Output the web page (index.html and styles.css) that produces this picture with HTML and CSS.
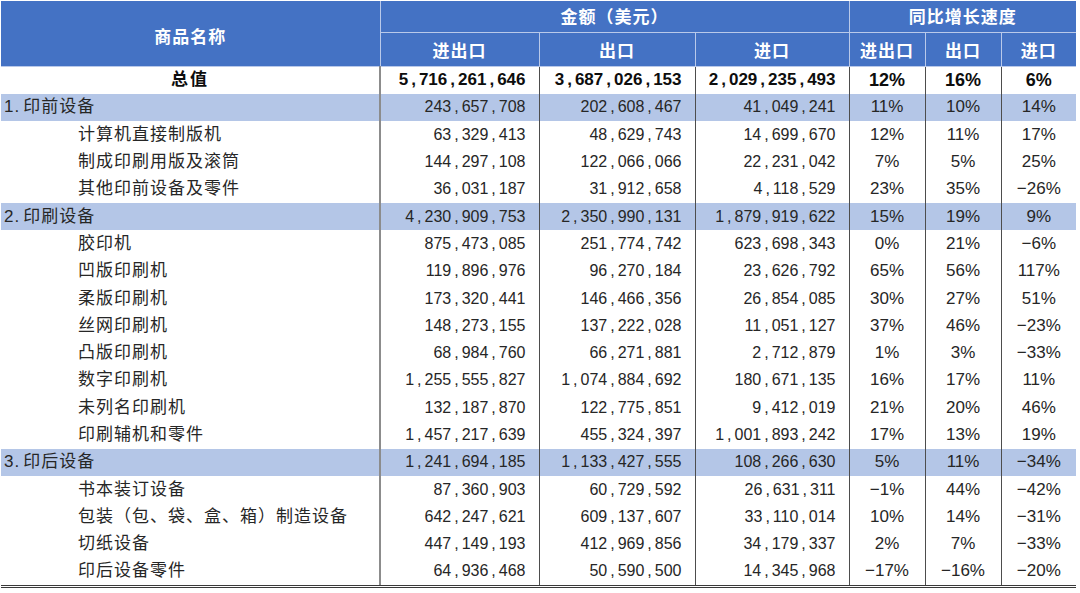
FILE: index.html
```html
<!DOCTYPE html>
<html lang="zh-CN">
<head>
<meta charset="utf-8">
<title>印刷设备进出口</title>
<link rel="stylesheet" href="styles.css">
</head>
<body>
<table class="trade">
  <colgroup>
    <col class="c-name"><col class="c-amt1"><col class="c-amt2"><col class="c-amt3"><col class="c-pct1"><col class="c-pct2"><col class="c-pct3">
  </colgroup>
  <thead>
    <tr class="h1">
      <th rowspan="2" class="h-name">商品名称</th>
      <th colspan="3">金额（美元）</th>
      <th colspan="3">同比增长速度</th>
    </tr>
    <tr class="h2">
      <th>进出口</th><th>出口</th><th>进口</th><th>进出口</th><th>出口</th><th>进口</th>
    </tr>
  </thead>
  <tbody>
    <tr class="total"><td class="name">总值</td><td class="n">5<i>,</i>716<i>,</i>261<i>,</i>646</td><td class="n">3<i>,</i>687<i>,</i>026<i>,</i>153</td><td class="n">2<i>,</i>029<i>,</i>235<i>,</i>493</td><td class="p">12%</td><td class="p">16%</td><td class="p">6%</td></tr>
    <tr class="band"><td class="name">1<i>.</i>印前设备</td><td class="n">243<i>,</i>657<i>,</i>708</td><td class="n">202<i>,</i>608<i>,</i>467</td><td class="n">41<i>,</i>049<i>,</i>241</td><td class="p">11%</td><td class="p">10%</td><td class="p">14%</td></tr>
    <tr><td class="name sub">计算机直接制版机</td><td class="n">63<i>,</i>329<i>,</i>413</td><td class="n">48<i>,</i>629<i>,</i>743</td><td class="n">14<i>,</i>699<i>,</i>670</td><td class="p">12%</td><td class="p">11%</td><td class="p">17%</td></tr>
    <tr><td class="name sub">制成印刷用版及滚筒</td><td class="n">144<i>,</i>297<i>,</i>108</td><td class="n">122<i>,</i>066<i>,</i>066</td><td class="n">22<i>,</i>231<i>,</i>042</td><td class="p">7%</td><td class="p">5%</td><td class="p">25%</td></tr>
    <tr><td class="name sub">其他印前设备及零件</td><td class="n">36<i>,</i>031<i>,</i>187</td><td class="n">31<i>,</i>912<i>,</i>658</td><td class="n">4<i>,</i>118<i>,</i>529</td><td class="p">23%</td><td class="p">35%</td><td class="p">−26%</td></tr>
    <tr class="band"><td class="name">2<i>.</i>印刷设备</td><td class="n">4<i>,</i>230<i>,</i>909<i>,</i>753</td><td class="n">2<i>,</i>350<i>,</i>990<i>,</i>131</td><td class="n">1<i>,</i>879<i>,</i>919<i>,</i>622</td><td class="p">15%</td><td class="p">19%</td><td class="p">9%</td></tr>
    <tr><td class="name sub">胶印机</td><td class="n">875<i>,</i>473<i>,</i>085</td><td class="n">251<i>,</i>774<i>,</i>742</td><td class="n">623<i>,</i>698<i>,</i>343</td><td class="p">0%</td><td class="p">21%</td><td class="p">−6%</td></tr>
    <tr><td class="name sub">凹版印刷机</td><td class="n">119<i>,</i>896<i>,</i>976</td><td class="n">96<i>,</i>270<i>,</i>184</td><td class="n">23<i>,</i>626<i>,</i>792</td><td class="p">65%</td><td class="p">56%</td><td class="p">117%</td></tr>
    <tr><td class="name sub">柔版印刷机</td><td class="n">173<i>,</i>320<i>,</i>441</td><td class="n">146<i>,</i>466<i>,</i>356</td><td class="n">26<i>,</i>854<i>,</i>085</td><td class="p">30%</td><td class="p">27%</td><td class="p">51%</td></tr>
    <tr><td class="name sub">丝网印刷机</td><td class="n">148<i>,</i>273<i>,</i>155</td><td class="n">137<i>,</i>222<i>,</i>028</td><td class="n">11<i>,</i>051<i>,</i>127</td><td class="p">37%</td><td class="p">46%</td><td class="p">−23%</td></tr>
    <tr><td class="name sub">凸版印刷机</td><td class="n">68<i>,</i>984<i>,</i>760</td><td class="n">66<i>,</i>271<i>,</i>881</td><td class="n">2<i>,</i>712<i>,</i>879</td><td class="p">1%</td><td class="p">3%</td><td class="p">−33%</td></tr>
    <tr><td class="name sub">数字印刷机</td><td class="n">1<i>,</i>255<i>,</i>555<i>,</i>827</td><td class="n">1<i>,</i>074<i>,</i>884<i>,</i>692</td><td class="n">180<i>,</i>671<i>,</i>135</td><td class="p">16%</td><td class="p">17%</td><td class="p">11%</td></tr>
    <tr><td class="name sub">未列名印刷机</td><td class="n">132<i>,</i>187<i>,</i>870</td><td class="n">122<i>,</i>775<i>,</i>851</td><td class="n">9<i>,</i>412<i>,</i>019</td><td class="p">21%</td><td class="p">20%</td><td class="p">46%</td></tr>
    <tr><td class="name sub">印刷辅机和零件</td><td class="n">1<i>,</i>457<i>,</i>217<i>,</i>639</td><td class="n">455<i>,</i>324<i>,</i>397</td><td class="n">1<i>,</i>001<i>,</i>893<i>,</i>242</td><td class="p">17%</td><td class="p">13%</td><td class="p">19%</td></tr>
    <tr class="band"><td class="name">3<i>.</i>印后设备</td><td class="n">1<i>,</i>241<i>,</i>694<i>,</i>185</td><td class="n">1<i>,</i>133<i>,</i>427<i>,</i>555</td><td class="n">108<i>,</i>266<i>,</i>630</td><td class="p">5%</td><td class="p">11%</td><td class="p">−34%</td></tr>
    <tr><td class="name sub">书本装订设备</td><td class="n">87<i>,</i>360<i>,</i>903</td><td class="n">60<i>,</i>729<i>,</i>592</td><td class="n">26<i>,</i>631<i>,</i>311</td><td class="p">−1%</td><td class="p">44%</td><td class="p">−42%</td></tr>
    <tr><td class="name sub">包装（包、袋、盒、箱）制造设备</td><td class="n">642<i>,</i>247<i>,</i>621</td><td class="n">609<i>,</i>137<i>,</i>607</td><td class="n">33<i>,</i>110<i>,</i>014</td><td class="p">10%</td><td class="p">14%</td><td class="p">−31%</td></tr>
    <tr><td class="name sub">切纸设备</td><td class="n">447<i>,</i>149<i>,</i>193</td><td class="n">412<i>,</i>969<i>,</i>856</td><td class="n">34<i>,</i>179<i>,</i>337</td><td class="p">2%</td><td class="p">7%</td><td class="p">−33%</td></tr>
    <tr class="last"><td class="name sub">印后设备零件</td><td class="n">64<i>,</i>936<i>,</i>468</td><td class="n">50<i>,</i>590<i>,</i>500</td><td class="n">14<i>,</i>345<i>,</i>968</td><td class="p">−17%</td><td class="p">−16%</td><td class="p">−20%</td></tr>
  </tbody>
</table>
</body>
</html>
```

FILE: styles.css
```css
html, body {
  margin: 0;
  padding: 0;
  background: #ffffff;
}

body {
  padding: 1px 0 0 1px;
  font-family: "Liberation Sans", "Noto Sans CJK SC", sans-serif;
  color: #262626;
}

.trade {
  border-collapse: collapse;
  table-layout: fixed;
  width: 1075px;
}

.c-name { width: 379px; }
.c-amt1 { width: 159px; }
.c-amt2 { width: 156px; }
.c-amt3 { width: 154px; }
.c-pct1 { width: 76px; }
.c-pct2 { width: 76px; }
.c-pct3 { width: 75px; }

.trade th {
  background: #4472c4;
  color: #ffffff;
  font-family: "Noto Sans CJK SC", sans-serif;
  font-weight: bold;
  font-size: 17px;
  letter-spacing: 1px;
  text-align: center;
  vertical-align: middle;
  padding: 0;
  border: 1px solid #b9c9ea;
  line-height: 20px;
}

.trade thead tr:first-child th { border-top: none; }
.trade th:first-child { border-left: none; }
.trade thead tr th:last-child { border-right: none; }

.h1 { height: 31px; }
.h2 { height: 34px; }
.h2 th { padding-top: 2px; }
.trade th.h-name { padding-top: 6px; }

.trade td {
  height: 27.3px;
  padding: 0;
  font-size: 16px;
  line-height: 20px;
  vertical-align: middle;
  white-space: nowrap;
  border-left: 1px solid #4d4d4d;
}

.trade td.name {
  border-left: none;
  border-right: 2px solid #8c8c8c;
  font-size: 17px;
  letter-spacing: 1px;
  padding-left: 3px;
}

.trade td.sub { padding-left: 77px; }

.trade td.n {
  text-align: right;
  padding-right: 13px;
}

.trade td.p {
  text-align: center;
  font-size: 17px;
}

.trade i {
  font-style: normal;
  padding: 0 3px;
}

.name i {
  padding: 0 3px 0 0;
}

.band td { background: #b4c6e7; }

.total td { color: #0d0d0d; font-weight: bold; font-size: 17px; }
.total td.p { font-size: 18px; }
.total td.name { text-align: center; padding-left: 0; letter-spacing: 2px; }

.last td { border-bottom: 3px double #3a3a3a; }
```
